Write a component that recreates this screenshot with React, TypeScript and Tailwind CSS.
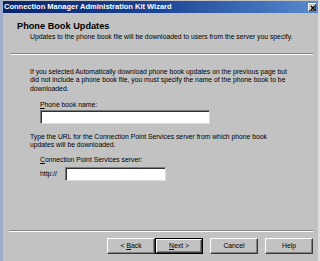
export default function App() {
  const btn =
    "h-[16px] w-[48px] flex items-center justify-center text-[6.8px] text-black border border-t-white border-l-white border-r-[#3a3a3a] border-b-[#3a3a3a] shadow-[inset_-1px_-1px_#808080] bg-[#c2c2c2]";
  const field =
    "h-[14px] bg-white border border-t-[#7a7a7a] border-l-[#7a7a7a] border-r-[#dcdcdc] border-b-[#dcdcdc] shadow-[inset_1px_1px_#303030]";

  return (
    <div className="w-[320px] h-[261px] flex bg-[#c2c2c2] font-['Liberation_Sans',Arial,sans-serif] overflow-hidden text-black">
      <div className="w-[3px] bg-[#a2adcb]" />
      <div className="flex-1 flex flex-col">
        {/* title bar */}
        <div className="mt-[1px] h-[12px] flex items-center justify-between pl-[1px] pr-[2px] bg-gradient-to-r from-[#0a246a] via-[#1c4696] to-[#5a8acd]">
          <span className="text-[7.5px] leading-[12px] font-bold text-white whitespace-nowrap">
            Connection Manager Administration Kit Wizard
          </span>
          <div className="w-[8px] h-[8px] bg-[#c8c8c8] border-t border-l border-t-white border-l-white shadow-[inset_-1px_-1px_#404040] flex items-center justify-center">
            <svg width="6" height="6" viewBox="0 0 6 6">
              <path d="M1 1 L5 5 M5 1 L1 5" stroke="#000" strokeWidth="1.2" />
            </svg>
          </div>
        </div>

        {/* header */}
        <div className="pl-[14px] pt-[8px]">
          <div className="text-[9.2px] leading-[11px] font-bold">Phone Book Updates</div>
          <div className="pl-[13px] mt-[1px] text-[6.8px] leading-[8px] whitespace-nowrap">
            Updates to the phone book file will be downloaded to users from the server you specify.
          </div>
        </div>
        <div className="mt-[12px] ml-[7px] mr-[5px] h-[2px] border-t border-t-[#858585] border-b border-b-white" />

        {/* body */}
        <div className="pl-[27px] mt-[13px] text-[6.8px] leading-[8.3px] whitespace-nowrap">
          <p>
            If you selected Automatically download phone book updates on the previous page but
            <br />
            did not include a phone book file, you must specify the name of the phone book to be
            <br />
            downloaded.
          </p>
          <div className="pl-[10px] mt-[8px]">
            <div>
              <span className="underline">P</span>hone book name:
            </div>
            <div className={field + " mt-[1px] w-[170px]"} />
          </div>
          <p className="mt-[9px]">
            Type the URL for the Connection Point Services server from which phone book
            <br />
            updates will be downloaded.
          </p>
          <div className="pl-[10px] mt-[6px]">
            <div>
              <span className="underline">C</span>onnection Point Services server:
            </div>
            <div className="mt-[3px] flex items-center">
              <span className="w-[25px]">http://</span>
              <div className={field + " w-[101px]"} />
            </div>
          </div>
        </div>

        {/* footer */}
        <div className="mt-auto ml-[6px] mr-[5px] h-[2px] border-t border-t-[#858585] border-b border-b-white" />
        <div className="mt-[6px] mb-[7px] mr-[5px] flex justify-end">
          <button className={btn}>
            &lt; <span className="underline ml-[2px]">B</span>ack
          </button>
          <div className="border border-black">
            <button className="h-[14px] w-[46px] flex items-center justify-center text-[6.8px] text-black border border-t-white border-l-white border-r-[#3a3a3a] border-b-[#3a3a3a] shadow-[inset_-1px_-1px_#808080] bg-[#c2c2c2]">
              <span className="underline">N</span>ext &gt;
            </button>
          </div>
          <button className={btn + " ml-[7px]"}>Cancel</button>
          <button className={btn + " ml-[7px]"}>Help</button>
        </div>
      </div>
      <div className="w-[2px] bg-[#dedede]" />
    </div>
  );
}
